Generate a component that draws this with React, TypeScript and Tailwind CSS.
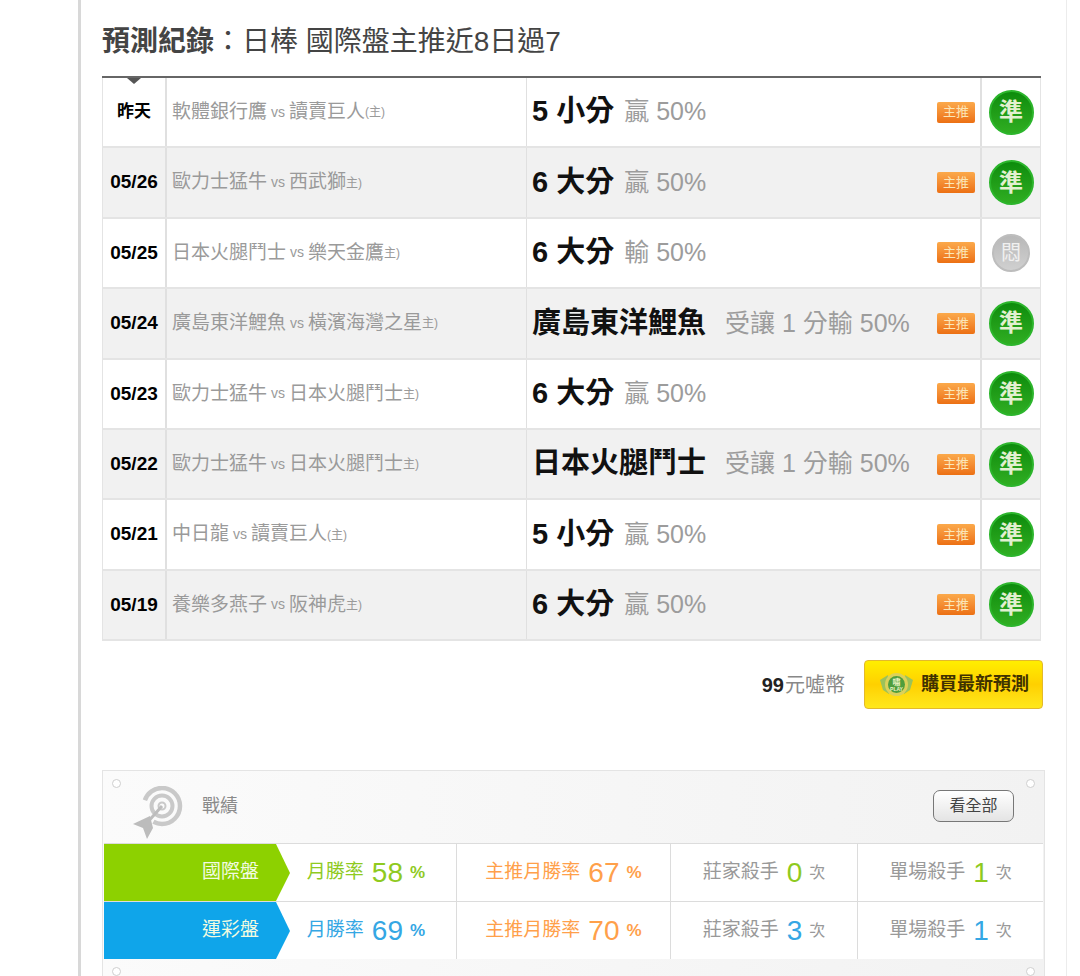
import React from "react";

const font = { fontFamily: '"Liberation Sans", "Noto Sans CJK TC", sans-serif' };

const rows = [
  { d: "昨天", a: "軟體銀行鷹", b: "讀賣巨人", tail: "(主)", big: "5 小分", rest: "贏 50%", ok: true },
  { d: "05/26", a: "歐力士猛牛", b: "西武獅", tail: "主)", big: "6 大分", rest: "贏 50%", ok: true },
  { d: "05/25", a: "日本火腿鬥士", b: "樂天金鷹", tail: "主)", big: "6 大分", rest: "輸 50%", ok: false },
  { d: "05/24", a: "廣島東洋鯉魚", b: "橫濱海灣之星", tail: "主)", big: "廣島東洋鯉魚", rest: "受讓 1 分輸 50%", ok: true, team: true },
  { d: "05/23", a: "歐力士猛牛", b: "日本火腿鬥士", tail: "主)", big: "6 大分", rest: "贏 50%", ok: true },
  { d: "05/22", a: "歐力士猛牛", b: "日本火腿鬥士", tail: "主)", big: "日本火腿鬥士", rest: "受讓 1 分輸 50%", ok: true, team: true },
  { d: "05/21", a: "中日龍", b: "讀賣巨人", tail: "(主)", big: "5 小分", rest: "贏 50%", ok: true },
  { d: "05/19", a: "養樂多燕子", b: "阪神虎", tail: "主)", big: "6 大分", rest: "贏 50%", ok: true },
];

function Target() {
  return (
    <svg width="50" height="53" viewBox="0 0 50 53" fill="none">
      <circle cx="29" cy="20" r="18" stroke="#c9c9c9" strokeWidth="4.5" strokeDasharray="88 25" strokeDashoffset="-62" />
      <circle cx="29" cy="20" r="10.5" stroke="#c9c9c9" strokeWidth="4" />
      <circle cx="29" cy="20" r="3.5" stroke="#c9c9c9" strokeWidth="2" />
      <path d="M29 20 L13 38" stroke="#bdbdbd" strokeWidth="3" />
      <path d="M0 38 L17 30 L20 42 L14 53 L10 42 Z" fill="#bcbcbc" />
    </svg>
  );
}

function Coin() {
  return (
    <svg width="33" height="25" viewBox="0 0 33 25" className="shrink-0">
      <path d="M0 8 L8 3 L9 22 L3 18 Z" fill="#9cc25a" />
      <path d="M33 8 L25 3 L24 22 L30 18 Z" fill="#9cc25a" />
      <circle cx="16.5" cy="12.5" r="11.5" fill="#dcd15a" />
      <circle cx="16.5" cy="12.5" r="8.5" fill="#4f9e3c" />
      <text x="16.5" y="13" textAnchor="middle" fontSize="8" fill="#eef5c8" style={{ fontFamily: '"Noto Sans CJK TC", sans-serif' }}>嘯</text>
      <text x="16.5" y="19" textAnchor="middle" fontSize="5" fontWeight="700" fill="#eef5c8" style={{ fontFamily: '"Liberation Sans", sans-serif' }}>PLAY</text>
    </svg>
  );
}

function Dot() {
  return <div className="w-[9px] h-[9px] rounded-full border border-[#cfcfcf] bg-white" />;
}

function Stat({ label, val, unit, color, w, labelColor, pct }: { label: string; val: string; unit: string; color: string; w: string; labelColor: string; pct?: boolean }) {
  return (
    <div className={`${w} shrink-0 flex items-center justify-center border-r border-[#dcdcdc] last:border-r-0 text-[19px] whitespace-nowrap ${labelColor}`}>
      <span>{label}</span>
      <span className={`text-[28px] leading-none ml-[8px] mr-[7px] ${color}`}>{val}</span>
      <span className={pct ? "text-[17px] font-bold" : "text-[16px]"}>{unit}</span>
    </div>
  );
}

export default function App() {
  return (
    <div style={font} className="w-[1080px] h-[976px] bg-white overflow-hidden">
      <div className="w-[989px] h-[976px] ml-[78px] border-l-[3px] border-r border-l-[#d8d8d8] border-r-[#ececec] pl-[21px] flex flex-col">
        <h2 className="mt-[24px] h-[36px] leading-[36px] text-[28px] text-[#444] whitespace-nowrap">
          <span className="font-bold">預測紀錄</span>：日棒 國際盤主推近8日過7
        </h2>
        <div className="relative mt-[16px] w-[939px] border-t-[2px] border-t-[#666]">
          <div className="absolute left-[25px] top-0 w-0 h-0 border-l-[7px] border-r-[7px] border-t-[6px] border-l-transparent border-r-transparent border-t-[#555]" />
          {rows.map((r, i) => (
            <div key={i} className={`flex h-[70.4px] border-b-2 border-l border-r border-[#e4e4e4] ${i % 2 ? "bg-[#f1f1f1]" : "bg-white"}`}>
              <div className={`w-[64px] shrink-0 flex items-center justify-center font-bold text-black border-r-2 border-[#e0e0e0] whitespace-nowrap ${i === 0 ? "text-[17px]" : "text-[19px]"}`}>{r.d}</div>
              <div className="w-[360px] shrink-0 flex items-center pl-[5px] text-[#9a9a9a] text-[19px] border-r border-[#e0e0e0] whitespace-nowrap">
                <span>{r.a}</span>
                <span className="text-[14px] mx-[4px]">vs</span>
                <span>{r.b}</span>
                <span className="text-[12px]">{r.tail}</span>
              </div>
              <div className="w-[455px] shrink-0 flex items-center pl-[5px] pr-[5px] border-r-2 border-[#e0e0e0] whitespace-nowrap">
                <span className="text-[29px] font-bold text-[#111]">{r.big}</span>
                <span className={`text-[#9c9c9c] text-[25px] ${r.team ? "ml-[19px]" : "ml-[10px]"}`}>{r.rest}</span>
                <span className="ml-auto w-[38px] h-[21px] rounded-[2px] bg-gradient-to-b from-[#fba94a] to-[#ec7012] flex items-center justify-center text-[13px] text-[#fbe6b8]">主推</span>
              </div>
              <div className="flex-1 flex items-center justify-center">
                {r.ok ? (
                  <div className="w-[45px] h-[45px] rounded-full border-2 border-[#2cb52c] bg-gradient-to-b from-[#0c8c0c] to-[#2fae22] flex items-center justify-center text-[24px] font-bold text-[#e2f0d0]">準</div>
                ) : (
                  <div className="w-[38px] h-[38px] rounded-full border-2 border-[#bdbdbd] bg-gradient-to-b from-[#b8b8b8] to-[#d0d0d0] flex items-center justify-center text-[20px] text-[#f0f0f0]">悶</div>
                )}
              </div>
            </div>
          ))}
        </div>
        <div className="mt-[19px] w-[941px] flex items-center justify-end">
          <span className="text-[20px] font-bold text-[#222]">99</span>
          <span className="text-[20px] text-[#888] ml-[1px]">元噓幣</span>
          <button className="ml-[19px] w-[179px] h-[49px] rounded-[4px] border border-[#e3b92c] bg-gradient-to-b from-[#ffee00] via-[#ffd000] to-[#ffe81a] flex items-center pl-[15px] gap-[8px] text-[18px] font-bold text-[#3f3200] whitespace-nowrap">
            <Coin />購買最新預測
          </button>
        </div>
        <div className="mt-[61px] w-[943px] border border-[#e4e4e4] bg-gradient-to-r from-[#fbfbfb] to-[#f2f2f2]">
          <div className="h-[72px] relative flex items-center pl-[30px] pr-[30px]">
            <div className="absolute left-[9px] top-[8px]"><Dot /></div>
            <div className="absolute right-[9px] top-[8px]"><Dot /></div>
            <div className="mt-[10px]"><Target /></div>
            <span className="ml-[19px] mt-[-2px] text-[18px] text-[#8a8a8a]">戰績</span>
            <button className="ml-auto w-[81px] h-[32px] mt-[-2px] rounded-[7px] border border-[#777] bg-gradient-to-b from-white to-[#e4e4e4] text-[16px] text-[#444]">看全部</button>
          </div>
          {[
            { name: "國際盤", c: "bg-[#8dd100]", arrow: "border-l-[#8dd100]", t: "text-[#8fca1f]", vals: ["58", "67", "0", "1"] },
            { name: "運彩盤", c: "bg-[#0fa5ea]", arrow: "border-l-[#0fa5ea]", t: "text-[#35a7e4]", vals: ["69", "70", "3", "1"] },
          ].map((g) => (
            <div key={g.name} className="relative flex h-[58px] ml-[1px] mr-[1px] bg-white border-t border-[#dcdcdc] last:border-b">
              <div className={`w-[172px] shrink-0 ${g.c} flex items-center justify-end pr-[17px] text-[#f2fbe0] text-[19px]`}>{g.name}</div>
              <div className={`absolute left-[172px] top-0 w-0 h-0 border-t-[29px] border-b-[28px] border-l-[14px] border-t-transparent border-b-transparent ${g.arrow}`} />
              <Stat pct label="月勝率" val={g.vals[0]} unit="%" color={g.t} labelColor={g.t} w="w-[181px]" />
              <Stat pct label="主推月勝率" val={g.vals[1]} unit="%" color="text-[#ffa04a]" labelColor="text-[#ffa04a]" w="w-[214px]" />
              <Stat label="莊家殺手" val={g.vals[2]} unit="次" color={g.t} labelColor="text-[#999]" w="w-[187px]" />
              <Stat label="單場殺手" val={g.vals[3]} unit="次" color={g.t} labelColor="text-[#999]" w="w-[185px]" />
            </div>
          ))}
          <div className="h-[20px] relative">
            <div className="absolute left-[9px] top-[8px]"><Dot /></div>
            <div className="absolute right-[9px] top-[8px]"><Dot /></div>
          </div>
        </div>
      </div>
    </div>
  );
}
